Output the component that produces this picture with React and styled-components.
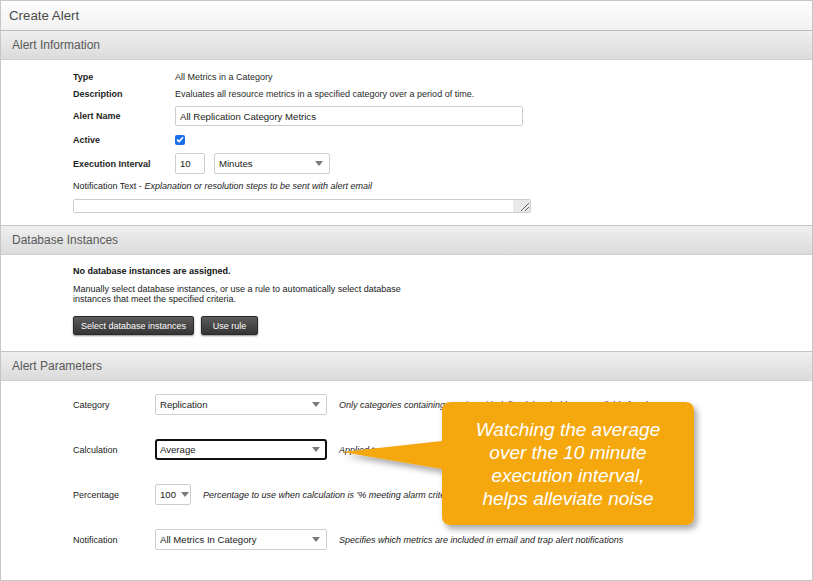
import React from "react";
import styled, { createGlobalStyle } from "styled-components";

const Global = createGlobalStyle`
  html, body { margin: 0; padding: 0; background: #fff; }
  body { font-family: "Liberation Sans", Arial, sans-serif; }
  * { box-sizing: border-box; }
`;

const Page = styled.div`
  position: relative;
  width: 813px;
  height: 581px;
  overflow: hidden;
`;

const Frame = styled.div`
  width: 813px;
  height: 581px;
  border: 1px solid #c6c6c6;
  display: flex;
  flex-direction: column;
`;

const TitleBar = styled.div`
  height: 30px;
  border-bottom: 1px solid #bcbcbc;
  background: linear-gradient(#fdfdfd, #f1f1f1);
  padding-left: 8px;
  font-size: 13.3px;
  line-height: 29px;
  color: #4a4a4a;
`;

const SectionHeader = styled.div`
  height: 29px;
  border-bottom: 1px solid #d0d0d0;
  background: linear-gradient(#efefef, #dbdbdb);
  padding-left: 11px;
  font-size: 12px;
  line-height: 28px;
  color: #585858;
`;

const SectionBody = styled.div`
  display: flex;
  flex-direction: column;
  align-items: flex-start;
  padding: ${(p) => p.$pad};
  border-bottom: ${(p) => (p.$last ? "none" : "1px solid #c4c4c4")};
  flex: ${(p) => (p.$last ? 1 : "none")};
`;

const InfoRow = styled.div`
  display: flex;
  align-items: center;
  height: ${(p) => p.$h}px;
  margin-top: ${(p) => p.$mt || 0}px;
  font-size: 9px;
  color: #222;
`;

const InfoLabel = styled.div`
  width: 102px;
  font-weight: bold;
  color: #1e1e1e;
`;

const InfoValue = styled.div`
  color: #2a2a2a;
`;

const TextBox = styled.div`
  width: ${(p) => p.$w}px;
  height: ${(p) => p.$h}px;
  border: 1px solid #cdcdcd;
  border-radius: 2px;
  background: #fff;
  display: flex;
  align-items: center;
  padding-left: 4px;
  font-size: 9.6px;
  color: #222;
  margin-right: ${(p) => p.$mr || 0}px;
`;

const Select = styled.div`
  width: ${(p) => p.$w}px;
  height: 21px;
  border: ${(p) => (p.$focus ? "2px solid #111" : "1px solid #cdcdcd")};
  border-radius: ${(p) => (p.$focus ? 3 : 2)}px;
  background: #fff;
  display: flex;
  align-items: center;
  justify-content: ${(p) => (p.$compact ? "flex-start" : "space-between")};
  gap: 5px;
  padding: ${(p) => (p.$focus ? "0 5px 0 3px" : "0 6px 0 4px")};
  font-size: 9.6px;
  color: #222;
  flex: none;
  svg { flex: none; }
`;

const Arrow = () => (
  <svg width="8" height="5" viewBox="0 0 8 5">
    <polygon points="0,0 8,0 4,5" fill="#7a7a7a" />
  </svg>
);

const Check = styled.div`
  width: 10px;
  height: 10px;
  border-radius: 2px;
  background: #1a6fe6;
  display: flex;
  align-items: center;
  justify-content: center;
`;

const NoteText = styled.div`
  height: 12px;
  margin-top: 6px;
  font-size: 9px;
  line-height: 12px;
  color: #222;
  em { font-style: italic; }
`;

const TextArea = styled.div`
  margin-top: 7px;
  width: 458px;
  height: 14px;
  border: 1px solid #cdcdcd;
  border-radius: 2px;
  display: flex;
  justify-content: flex-end;
  overflow: hidden;
`;

const Grip = styled.div`
  width: 17px;
  height: 100%;
  background: #e9e9e9;
  display: flex;
  align-items: flex-end;
  justify-content: flex-end;
`;

const BoldLine = styled.div`
  font-size: 9px;
  font-weight: bold;
  line-height: 12px;
  color: #111;
`;

const Para = styled.div`
  margin-top: 7px;
  font-size: 9px;
  line-height: 10px;
  color: #222;
`;

const ButtonRow = styled.div`
  display: flex;
  gap: 7px;
  margin-top: 12px;
`;

const DarkButton = styled.div`
  height: 19px;
  min-width: 57px;
  padding: 0 7px;
  border: 1px solid #2a2a2a;
  border-radius: 2px;
  background: linear-gradient(#5c5c5c, #353535);
  box-shadow: 0 1px 2px rgba(0, 0, 0, 0.45);
  color: #fff;
  font-size: 9px;
  display: flex;
  align-items: center;
  justify-content: center;
`;

const ParamList = styled.div`
  display: flex;
  flex-direction: column;
  gap: 24px;
`;

const ParamRow = styled.div`
  display: flex;
  align-items: center;
  height: 21px;
`;

const ParamLabel = styled.div`
  width: 82px;
  font-size: 9px;
  color: #222;
`;

const Help = styled.div`
  margin-left: 12px;
  font-size: 9px;
  font-style: italic;
  color: #222;
  white-space: nowrap;
`;

const CalloutSvg = styled.svg`
  position: absolute;
  left: 0;
  top: 0;
  pointer-events: none;
`;

const CalloutText = styled.div`
  position: absolute;
  left: 442px;
  top: 402px;
  width: 252px;
  height: 123px;
  display: flex;
  align-items: center;
  justify-content: center;
  text-align: center;
  color: #fff;
  font-style: italic;
  font-size: 19px;
  line-height: 23px;
`;

export default function App() {
  return (
    <Page>
      <Global />
      <Frame>
        <TitleBar>Create Alert</TitleBar>

        <SectionHeader>Alert Information</SectionHeader>
        <SectionBody $pad="10px 0 12px 72px">
          <InfoRow $h={13}>
            <InfoLabel>Type</InfoLabel>
            <InfoValue>All Metrics in a Category</InfoValue>
          </InfoRow>
          <InfoRow $h={13} $mt={4}>
            <InfoLabel>Description</InfoLabel>
            <InfoValue>Evaluates all resource metrics in a specified category over a period of time.</InfoValue>
          </InfoRow>
          <InfoRow $h={20} $mt={6}>
            <InfoLabel>Alert Name</InfoLabel>
            <TextBox $w={348} $h={20}>All Replication Category Metrics</TextBox>
          </InfoRow>
          <InfoRow $h={13} $mt={7}>
            <InfoLabel>Active</InfoLabel>
            <Check>
              <svg width="8" height="7" viewBox="0 0 8 7">
                <path d="M1 3.6 L3.1 5.6 L7 1.2" stroke="#fff" strokeWidth="1.6" fill="none" />
              </svg>
            </Check>
          </InfoRow>
          <InfoRow $h={21} $mt={7}>
            <InfoLabel>Execution Interval</InfoLabel>
            <TextBox $w={30} $h={21} $mr={9}>10</TextBox>
            <Select $w={116}>
              <span>Minutes</span>
              <Arrow />
            </Select>
          </InfoRow>
          <NoteText>
            Notification Text - <em>Explanation or resolution steps to be sent with alert email</em>
          </NoteText>
          <TextArea>
            <Grip>
              <svg width="12" height="12" viewBox="0 0 12 12">
                <path d="M3 11 L11 3 M7 11 L11 7" stroke="#555" strokeWidth="0.9" />
              </svg>
            </Grip>
          </TextArea>
        </SectionBody>

        <SectionHeader>Database Instances</SectionHeader>
        <SectionBody $pad="10px 0 16px 72px">
          <BoldLine>No database instances are assigned.</BoldLine>
          <Para>
            Manually select database instances, or use a rule to automatically select database
            <br />
            instances that meet the specified criteria.
          </Para>
          <ButtonRow>
            <DarkButton>Select database instances</DarkButton>
            <DarkButton>Use rule</DarkButton>
          </ButtonRow>
        </SectionBody>

        <SectionHeader>Alert Parameters</SectionHeader>
        <SectionBody $pad="13px 0 0 72px" $last>
          <ParamList>
            <ParamRow>
              <ParamLabel>Category</ParamLabel>
              <Select $w={172}>
                <span>Replication</span>
                <Arrow />
              </Select>
              <Help>Only categories containing metrics with defined thresholds are available for alerts</Help>
            </ParamRow>
            <ParamRow>
              <ParamLabel>Calculation</ParamLabel>
              <Select $w={172} $focus>
                <span>Average</span>
                <Arrow />
              </Select>
              <Help>Applied to each metric</Help>
            </ParamRow>
            <ParamRow>
              <ParamLabel>Percentage</ParamLabel>
              <Select $w={36} $compact>
                <span>100</span>
                <Arrow />
              </Select>
              <Help>Percentage to use when calculation is '% meeting alarm criteria'</Help>
            </ParamRow>
            <ParamRow>
              <ParamLabel>Notification</ParamLabel>
              <Select $w={172}>
                <span>All Metrics In Category</span>
                <Arrow />
              </Select>
              <Help>Specifies which metrics are included in email and trap alert notifications</Help>
            </ParamRow>
          </ParamList>
        </SectionBody>
      </Frame>

      <CalloutSvg width="813" height="581" viewBox="0 0 813 581">
        <defs>
          <filter id="cs" x="-20%" y="-20%" width="140%" height="150%">
            <feDropShadow dx="3" dy="4" stdDeviation="3" floodColor="#000" floodOpacity="0.35" />
          </filter>
        </defs>
        <path
          d="M451 402 H685 Q694 402 694 411 V516 Q694 525 685 525 H451 Q442 525 442 516 V469 L342 452 L442 441 V411 Q442 402 451 402 Z"
          fill="#F5A80D"
          filter="url(#cs)"
        />
      </CalloutSvg>
      <CalloutText>
        <div>
          Watching the average
          <br />
          over the 10 minute
          <br />
          execution interval,
          <br />
          helps alleviate noise
        </div>
      </CalloutText>
    </Page>
  );
}
